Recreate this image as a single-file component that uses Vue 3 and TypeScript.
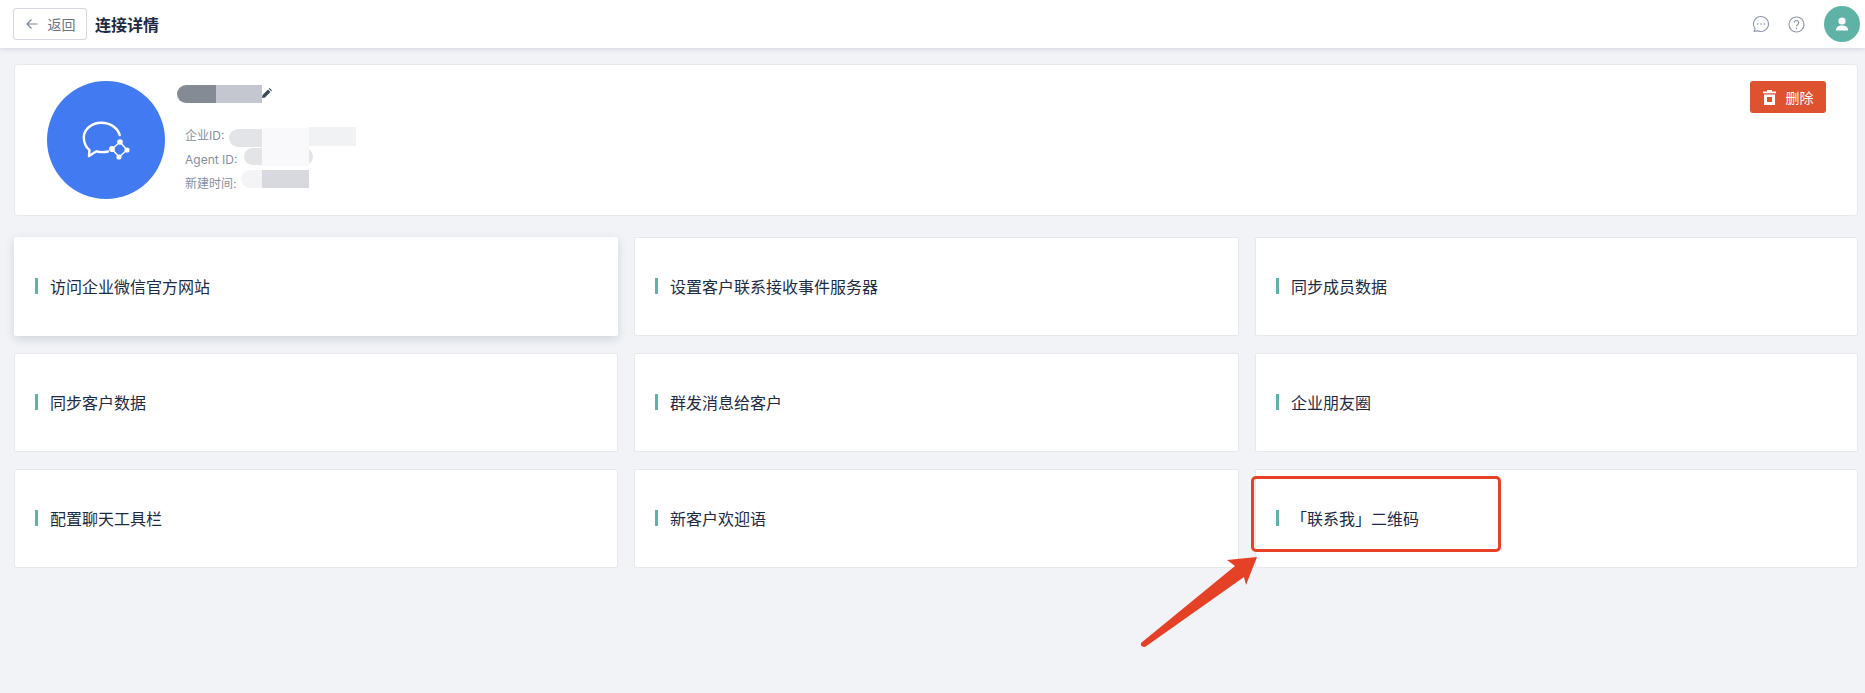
<script setup lang="ts">
const items: string[] = [
  '访问企业微信官方网站', '设置客户联系接收事件服务器', '同步成员数据',
  '同步客户数据', '群发消息给客户', '企业朋友圈',
  '配置聊天工具栏', '新客户欢迎语', '「联系我」二维码'
]
const meta = [
  { label: '企业ID:' },
  { label: 'Agent ID:' },
  { label: '新建时间:' }
]
</script>

<template>
  <div class="page">
    <header class="top">
      <button class="back" type="button">
        <svg width="14" height="14" viewBox="0 0 14 14" fill="none" stroke="#7c8798" stroke-width="1.2">
          <path d="M12.5 7H2M6.5 2.5 2 7l4.500 4.500" />
        </svg>
        <span>返回</span>
      </button>
      <h1 class="title">连接详情</h1>
      <div class="top-right">
        <svg class="ic" width="18" height="18" viewBox="0 0 18 18" fill="none" stroke="#8d97aa" stroke-width="1.1">
          <path d="M9 1.500a7.500 7.500 0 1 1-3.300 14.200L2.200 16.500l.8-3A7.500 7.500 0 0 1 9 1.500Z" />
          <circle cx="5.700" cy="9" r=".8" fill="#8d97aa" stroke="none" />
          <circle cx="9" cy="9" r=".8" fill="#8d97aa" stroke="none" />
          <circle cx="12.300" cy="9" r=".8" fill="#8d97aa" stroke="none" />
        </svg>
        <svg class="ic" width="17" height="17" viewBox="0 0 17 17" fill="none" stroke="#8d97aa" stroke-width="1.1">
          <circle cx="8.500" cy="8.500" r="7.500" />
          <path d="M6.300 6.700a2.200 2.200 0 1 1 3.400 1.800c-.8.500-1.200 1-1.200 2" />
          <circle cx="8.500" cy="12.500" r=".7" fill="#8d97aa" stroke="none" />
        </svg>
        <div class="user">
          <svg width="14" height="14" viewBox="0 0 14 14" fill="#fff">
            <circle cx="7" cy="4" r="3.600" />
            <path d="M0.800 13.500c0-3.300 2.500-5 6.200-5s6.200 1.700 6.200 5Z" />
          </svg>
        </div>
      </div>
    </header>

    <main class="content">
      <section class="info">
        <div class="logo">
          <svg width="48" height="44" viewBox="0 0 48 44" fill="none">
            <path d="M26 33.500c-1.800.4-3.800.6-5.800.6-2 0-4-.3-5.800-.8L7 38l.4-6C3.800 29 1.800 24.500 1.800 19.500 1.800 11 9.800 4.800 19.500 4.800c8.500 0 16 4.800 18.200 12.200" stroke="#fff" stroke-width="2.400" stroke-linecap="round" stroke-linejoin="round" />
            <path d="M38 24l7 8-8 7-7-8Z" stroke="#fff" stroke-width="1.400" />
            <circle cx="38" cy="24" r="2.800" fill="#fff" />
            <circle cx="45" cy="32" r="2.600" fill="#fff" />
            <circle cx="37" cy="39" r="2.600" fill="#fff" />
            <circle cx="30" cy="31" r="2.900" fill="#fff" />
          </svg>
        </div>
        <div class="details">
          <div class="name-row">
            <div class="name-mask"><i class="m1"></i><i class="m2"></i></div>
            <svg class="pencil" width="10" height="10" viewBox="0 0 10 10" fill="#3a465c">
              <path d="M0 10l.6-3L6 1.600 8.400 4 3 9.400ZM6.800.8 7.600 0 10 2.400 9.200 3.200Z" />
            </svg>
          </div>
          <ul class="meta">
            <li v-for="m in meta" :key="m.label">{{ m.label }}</li>
          </ul>
          <i class="blur b1"></i><i class="blur b2"></i><i class="blur b3"></i>
          <i class="blur b4"></i><i class="blur b5"></i><i class="blur b6"></i>
        </div>
        <button class="del" type="button">
          <svg width="13" height="15" viewBox="0 0 13 15" fill="#fff">
            <path d="M4 0h5v1.500h4V3.200H0V1.500h4ZM1 4.500h11V15H1Zm3 2.500v5h5V7Z" />
          </svg>
          <span>删除</span>
        </button>
      </section>

      <section class="grid">
        <div v-for="(t, i) in items" :key="t" class="card" :class="{ raised: i === 0 }">
          <i class="bar"></i>
          <span>{{ t }}</span>
        </div>
      </section>
    </main>

    <div class="mark"></div>
    <svg class="arrow" width="130" height="106" viewBox="0 0 130 106">
      <path d="M2 99 L96 22 L88 16 L118 13 L107 41 L105 33 L6 103 Q1 103 2 99Z" fill="#e44126" />
    </svg>
  </div>
</template>

<style>
html, body { margin: 0; background: #f1f3f7; }
</style>

<style scoped>
.page {
  position: relative;
  width: 1865px;
  height: 693px;
  overflow: hidden;
  background: #f1f3f7;
  font-family: Inter, "Noto Sans CJK SC", sans-serif;
  color: #1f2d4a;
}
.top {
  height: 48px;
  box-sizing: border-box;
  padding: 0 5px 0 13px;
  display: flex;
  align-items: center;
  background: #fff;
  box-shadow: 0 1px 5px rgba(40, 50, 80, .16);
}
.back {
  width: 74px;
  height: 32px;
  box-sizing: border-box;
  display: flex;
  align-items: center;
  justify-content: center;
  gap: 9px;
  padding: 0;
  background: #fff;
  border: 1px solid #d3d7e0;
  border-radius: 3px;
  font: 14px "Noto Sans CJK SC", sans-serif;
  color: #6c7688;
}
.title {
  margin: 0 0 0 8px;
  font: 700 16px "Noto Sans CJK SC", sans-serif;
  color: #1c2a45;
}
.top-right {
  margin-left: auto;
  display: flex;
  align-items: center;
}
.ic:nth-child(1) { margin-right: 18px; }
.ic:nth-child(2) { margin-right: 19px; }
.user {
  width: 36px;
  height: 36px;
  border-radius: 50%;
  background: #5eb2a6;
  display: flex;
  align-items: center;
  justify-content: center;
}
.content { padding: 16px 7px 0 14px; }
.info {
  position: relative;
  height: 152px;
  box-sizing: border-box;
  display: flex;
  padding: 16px 31px 0 32px;
  background: #fff;
  border: 1px solid #e6e8ee;
  border-radius: 3px;
}
.logo {
  width: 118px;
  height: 118px;
  flex: none;
  border-radius: 50%;
  background: #427af2;
  display: flex;
  align-items: center;
  justify-content: center;
}
.details {
  position: relative;
  flex: 1;
  margin-left: 12px;
}
.name-row {
  display: flex;
  align-items: center;
  height: 18px;
  margin-top: 4px;
}
.name-mask {
  display: flex;
  width: 85px;
  height: 18px;
  border-radius: 9px 0 0 9px;
  overflow: hidden;
}
.m1 { width: 39px; background: #858b95; }
.m2 { width: 46px; background: #c4c7cf; }
.pencil { margin: 0 0 3px 0; }
.meta {
  list-style: none;
  margin: 21px 0 0 8px;
  padding: 0;
  font-size: 12px;
  line-height: 24px;
  color: #868f9f;
}
.blur { position: absolute; display: block; }
.b1 { left: 52px; top: 48px; width: 60px; height: 18px; background: #e3e4e8; border-radius: 9px 0 0 9px; }
.b2 { left: 132px; top: 46px; width: 47px; height: 19px; background: #f1f2f4; }
.b3 { left: 67px; top: 67px; width: 69px; height: 17px; background: #e3e4e8; border-radius: 9px; }
.b4 { left: 64px; top: 89px; width: 25px; height: 18px; background: #f4f4f6; border-radius: 9px 0 0 9px; }
.b5 { left: 85px; top: 89px; width: 47px; height: 18px; background: #d8d9de; }
.b6 { left: 85px; top: 47px; width: 47px; height: 38px; background: #f9f9fb; }
.del {
  align-self: flex-start;
  margin-top: 0;
  width: 76px;
  height: 32px;
  box-sizing: border-box;
  display: flex;
  align-items: center;
  justify-content: center;
  gap: 10px;
  padding: 0;
  border: 0;
  border-radius: 3px;
  background: #de5230;
  color: #fff;
  font: 14px "Noto Sans CJK SC", sans-serif;
}
.grid {
  margin-top: 21px;
  display: grid;
  grid-template-columns: 604px 605px 603px;
  grid-auto-rows: 99px;
  column-gap: 16px;
  row-gap: 17px;
}
.card {
  display: flex;
  align-items: center;
  box-sizing: border-box;
  padding-left: 20px;
  padding-bottom: 2px;
  background: #fff;
  border: 1px solid #e6e8ee;
  border-radius: 2px;
  font: 16px "Noto Sans CJK SC", sans-serif;
  color: #1c2a45;
}
.card.raised {
  border-color: transparent;
  box-shadow: 0 3px 10px rgba(40, 50, 80, .16);
}
.bar {
  width: 3px;
  height: 16px;
  margin-right: 12px;
  background: #5eb2a6;
}
.mark {
  position: absolute;
  left: 1251px;
  top: 476px;
  width: 250px;
  height: 76px;
  box-sizing: border-box;
  border: 3px solid #e44126;
  border-radius: 5px;
}
.arrow {
  position: absolute;
  left: 1139px;
  top: 544px;
}
</style>
